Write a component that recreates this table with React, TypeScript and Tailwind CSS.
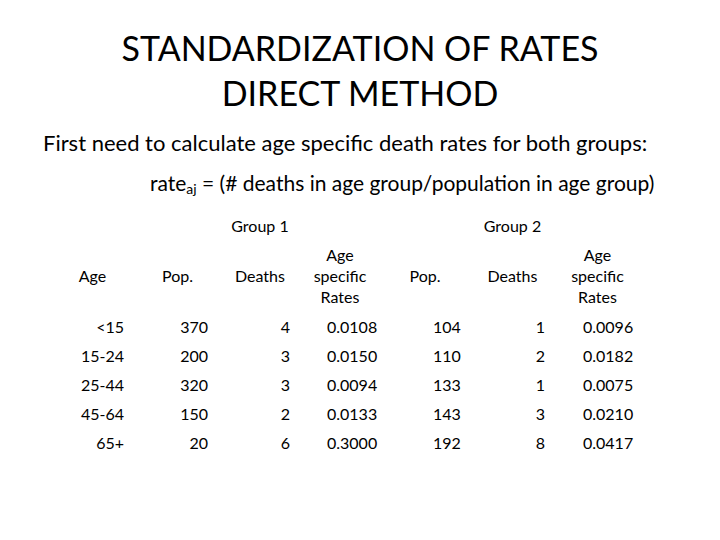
import React from "react";

type Row = {
  age: string;
  pop1: string;
  deaths1: string;
  rate1: string;
  pop2: string;
  deaths2: string;
  rate2: string;
};

const rows: Row[] = [
  { age: "<15", pop1: "370", deaths1: "4", rate1: "0.0108", pop2: "104", deaths2: "1", rate2: "0.0096" },
  { age: "15-24", pop1: "200", deaths1: "3", rate1: "0.0150", pop2: "110", deaths2: "2", rate2: "0.0182" },
  { age: "25-44", pop1: "320", deaths1: "3", rate1: "0.0094", pop2: "133", deaths2: "1", rate2: "0.0075" },
  { age: "45-64", pop1: "150", deaths1: "2", rate1: "0.0133", pop2: "143", deaths2: "3", rate2: "0.0210" },
  { age: "65+", pop1: "20", deaths1: "6", rate1: "0.3000", pop2: "192", deaths2: "8", rate2: "0.0417" },
];

const cols = "grid grid-cols-[85px_85px_80px_80px_90px_85px_85px]";

const App: React.FC = () => {
  return (
    <div
      className="w-[720px] h-[540px] bg-white text-black overflow-hidden"
      style={{ fontFamily: "Lato, 'Liberation Sans', sans-serif" }}
    >
      <div className="pt-[25px] text-center text-[34px] leading-[45px]">
        <div>STANDARDIZATION OF RATES</div>
        <div>DIRECT METHOD</div>
      </div>

      <div className="mt-[8px] text-[22px] leading-[40px]">
        <div className="pl-[43px]">
          First need to calculate age specific death rates for both groups:
        </div>
        <div className="pl-[150px] text-[21px]">
          rate<sub className="text-[14px] relative top-[3px]">aj</sub> = (# deaths in age group/population in age group)
        </div>
      </div>

      <div className="ml-[50px] mt-[8px] text-[16px]">
        <div className={`${cols} h-[30px] items-center`}>
          <div />
          <div />
          <div className="text-center">Group 1</div>
          <div />
          <div />
          <div className="text-center">Group 2</div>
          <div />
        </div>
        <div className={`${cols} items-center leading-[21px] mt-[3px]`}>
          <div className="text-center">Age</div>
          <div className="text-center">Pop.</div>
          <div className="text-center">Deaths</div>
          <div className="text-center">
            Age
            <br />
            specific
            <br />
            Rates
          </div>
          <div className="text-center">Pop.</div>
          <div className="text-center">Deaths</div>
          <div className="text-center">
            Age
            <br />
            specific
            <br />
            Rates
          </div>
        </div>
        <div className="mt-[5px]">
          {rows.map((r) => (
            <div key={r.age} className={`${cols} h-[29px] items-center`}>
              <div className="text-right pr-[11px]">{r.age}</div>
              <div className="text-right pr-[12px]">{r.pop1}</div>
              <div className="text-right pr-[10px]">{r.deaths1}</div>
              <div className="pl-[27px]">{r.rate1}</div>
              <div className="pl-[53px]">{r.pop2}</div>
              <div className="text-right pr-[10px]">{r.deaths2}</div>
              <div className="pl-[28px]">{r.rate2}</div>
            </div>
          ))}
        </div>
      </div>
    </div>
  );
};

export default App;
